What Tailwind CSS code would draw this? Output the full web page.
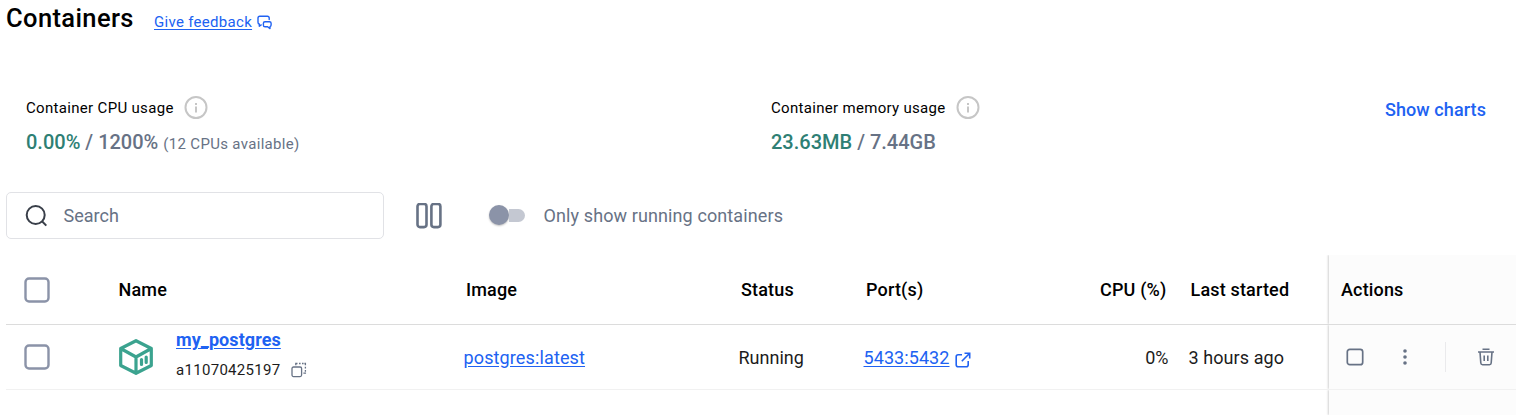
<!DOCTYPE html>
<html lang="en">
<head>
<meta charset="utf-8">
<title>Containers</title>
<script src="https://cdn.jsdelivr.net/npm/@tailwindcss/browser@4"></script>
</head>
<body class="bg-white">
<main class="flex h-[415px] w-[1520px] flex-col overflow-hidden pl-[6px] pr-1 font-['Roboto',sans-serif] text-lg whitespace-nowrap text-black">
  <header class="flex h-[84px] items-start">
    <h1 class="w-[148px] pt-[2px] text-[25.5px] leading-8 font-medium tracking-[0.38px]">Containers</h1>
    <a class="flex items-center pt-[11px] text-[#2062f2]"><span class="text-[15px] leading-[22px] tracking-[0.3px] underline underline-offset-2">Give feedback</span>
      <svg class="mt-px ml-[5px] h-4 w-4" viewBox="0 0 16 16" fill="none" stroke="currentColor" stroke-width="1.4" stroke-linejoin="round" stroke-linecap="round"><path d="M12.2 4.5V3q0-1.8-1.8-1.8H2.8Q1 1.2 1 3v4.2Q1 9 2.3 9v2.3L4.2 9.900"/><path d="M8 6.700h4.500q1.600 0 1.600 1.600v1.800q0 1.300-1.100 1.500v2L10.600 11.800H8q-1.600 0-1.600-1.600V8.300q0-1.600 1.600-1.600Z"/></svg></a>
  </header>

  <section class="flex h-[108px] pl-5">
    <div class="w-[745px] pt-3">
      <div class="flex h-6 items-center gap-[10.5px] text-[15px] tracking-[0.32px]"><span class="pt-0.5">Container CPU usage</span>
        <svg class="h-6 w-6" viewBox="0 0 24 24" fill="none" stroke="#c6c6c6" stroke-width="2"><circle cx="12" cy="11.5" r="10.5"/><path d="M12 10.500v6M12 7v2"/></svg></div>
      <div class="flex items-baseline pt-[7px] text-xl leading-[30px] font-medium text-[#677285]"><span class="text-[#2e7f74]">0.00%</span><span class="whitespace-pre"> / 1200%</span><span class="ml-[5px] text-[15px] font-normal tracking-[0.32px]">(12 CPUs available)</span></div>
    </div>
    <div class="w-[614px] pt-3">
      <div class="flex h-6 items-center gap-[10.5px] text-[15px] tracking-[0.31px]"><span class="pt-0.5">Container memory usage</span>
        <svg class="h-6 w-6" viewBox="0 0 24 24" fill="none" stroke="#c6c6c6" stroke-width="2"><circle cx="12" cy="11.5" r="10.5"/><path d="M12 10.500v6M12 7v2"/></svg></div>
      <div class="pt-[7px] text-xl leading-[30px] font-medium text-[#677285]"><span class="text-[#2e7f74]">23.63MB</span> / 7.44GB</div>
    </div>
    <a class="pt-3 leading-7 font-medium tracking-[0.08px] text-[#2062f2]">Show charts</a>
  </section>

  <section class="flex h-[47px] items-center">
    <div class="flex h-[47px] w-[378px] items-center rounded-[5px] border border-[#e1e2e6] pl-[18px] text-[#677285]">
      <svg class="mr-[14.5px] h-6 w-6" viewBox="0 0 24 24" fill="none" stroke="#393f49" stroke-width="2"><circle cx="10.7" cy="11" r="9"/><path d="m17 17.300 4.300 4.300"/></svg>
      <span>Search</span>
    </div>
    <svg class="ml-8 h-[26px] w-[26px]" viewBox="0 0 26 26" fill="none" stroke="#677285" stroke-width="2.6"><rect x="1.5" y="0.9" width="9" height="23.2" rx="2.5"/><rect x="15.4" y="0.9" width="9" height="23.2" rx="2.5"/></svg>
    <div class="ml-[47px] flex h-5 w-9 items-center"><div class="mb-px h-5 w-5 shrink-0 rounded-full bg-[#8b93a8] shadow-[0_1px_2px_rgba(0,0,0,0.25)]"></div><div class="h-[13px] w-4 rounded-r-full bg-[#c4c8d2]"></div></div>
    <span class="ml-[18.5px] tracking-[0.11px] text-[#677285]">Only show running containers</span>
  </section>

  <section class="mt-4 flex h-[160px] w-[1510px] flex-col">
    <div class="flex h-[70px] items-center border-b border-[#dcdcdc] font-medium tracking-[0.17px]">
      <div class="w-[112.5px] shrink-0 pl-[18px]"><svg class="h-[26px] w-[26px]" viewBox="0 0 26 26" fill="none" stroke="#8b93a8" stroke-width="2.4"><rect x="1.5" y="1.5" width="23" height="23" rx="3.5"/></svg></div>
      <div class="w-[347.5px] shrink-0">Name</div>
      <div class="w-[275px] shrink-0">Image</div>
      <div class="w-[125px] shrink-0">Status</div>
      <div class="w-[205px] shrink-0">Port(s)</div>
      <div class="w-[95.5px] shrink-0 text-right">CPU (%)</div>
      <div class="w-[162.5px] shrink-0 pl-6">Last started</div>
      <div class="flex h-full grow items-center bg-[#fcfcfc] pl-3 tracking-[0.15px] shadow-[-1px_0_2px_rgba(0,0,0,0.18)] [clip-path:inset(0_0_0_-4px)]">Actions</div>
    </div>
    <div class="flex h-[65px] items-center border-b border-[#f1f1f1] text-[#1c1c1c]">
      <div class="w-[112.5px] shrink-0 pl-[18px]"><svg class="h-[26px] w-[26px]" viewBox="0 0 26 26" fill="none" stroke="#8b93a8" stroke-width="2.4"><rect x="1.5" y="1.5" width="23" height="23" rx="3.5"/></svg></div>
      <div class="flex w-[345px] shrink-0 items-center">
        <svg class="-ml-[0.5px] mr-[22px] h-9 w-9" viewBox="0 0 36 36" fill="none" stroke="#3ba38f" stroke-width="3.2" stroke-linejoin="round"><path d="M18 1.700 33.300 9.500v17L18 34.300 2.700 26.500v-17ZM2.700 9.500 18 18l15.300-8.500M18 18v16.300"/><path d="M23.500 20.500v5M28.200 18v5.500" stroke-linecap="round"/></svg>
        <div class="flex flex-col pb-[4px]"><a class="h-[31px] leading-[26px] font-bold tracking-[0.08px] text-[#2062f2] underline underline-offset-2">my_postgres</a>
          <div class="flex h-[26px] items-center text-[15px] tracking-[0.3px]"><span>a11070425197</span>
            <svg class="mb-px ml-[10px] h-4 w-4" viewBox="0 0 16 16" fill="none" stroke="#677285" stroke-width="1.3"><rect x="1" y="5" width="9.6" height="9.6" rx="1.5"/><path d="M4.800 3.200V1.500h1.700M8 1.500h1.600M11 1.500h1.600M13.400 1.500h1v1.700M14.400 4.700v1.800M14.400 8v1.700M14.400 10.600v.6h-2"/></svg></div></div>
      </div>
      <div class="w-[275px] shrink-0 pt-px"><a class="tracking-[0.13px] text-[#2062f2] underline underline-offset-2">postgres:latest</a></div>
      <div class="w-[125px] shrink-0 pt-0.5">Running</div>
      <div class="flex w-[205px] shrink-0 items-center pt-px text-[#2062f2]"><a class="tracking-[0.08px] underline underline-offset-2">5433:5432</a>
        <svg class="mt-1 ml-[5px] h-4 w-4" viewBox="0 0 16 16" fill="none" stroke="currentColor" stroke-width="1.6"><path d="M7 2.800H3.200Q1.200 2.800 1.200 4.800v8q0 2 2 2h8q2 0 2-2V9M6.800 9.200l7.600-7.700M9.500 1.300h5.200v5.300"/></svg></div>
      <div class="w-[100px] shrink-0 pt-0.5 text-right">0%</div>
      <div class="w-[160.5px] shrink-0 pt-0.5 pl-5 tracking-[0.08px]">3 hours ago</div>
      <div class="flex h-full grow items-center bg-[#fcfcfc] pl-[17px] text-[#677285] shadow-[-1px_0_2px_rgba(0,0,0,0.18)] [clip-path:inset(0_0_0_-4px)]">
        <svg class="h-[18px] w-[18px]" viewBox="0 0 18 18" fill="none" stroke="currentColor" stroke-width="1.7"><rect x="1.3" y="1.3" width="15.4" height="15.4" rx="2.5"/></svg>
        <svg class="ml-[38px] h-[18px] w-[6px]" viewBox="0 0 6 18" fill="currentColor"><circle cx="3" cy="3" r="1.8"/><circle cx="3" cy="9" r="1.8"/><circle cx="3" cy="15" r="1.8"/></svg>
        <div class="ml-[37px] h-[30px] w-px bg-[#eaeaec]"></div>
        <svg class="ml-[31px] h-[18px] w-[18px]" viewBox="0 0 18 18" fill="none" stroke="currentColor" stroke-width="1.6"><path d="M1 4h16M5.500 1.200h7M3 4l.8 11q.1 1.700 1.800 1.700h6.800q1.700 0 1.800-1.700L15 4M7.200 7.400v5.500M10.800 7.400v5.500"/></svg>
      </div>
    </div>
    <div class="flex grow justify-end"><div class="w-[187px] bg-[#fcfcfc] shadow-[-1px_0_2px_rgba(0,0,0,0.18)] [clip-path:inset(0_0_0_-4px)]"></div></div>
  </section>
</main>
</body>
</html>
